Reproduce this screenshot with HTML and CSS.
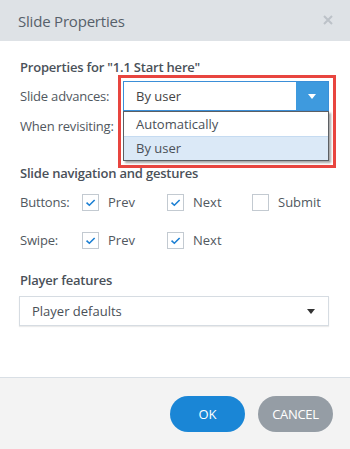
FILE: index.html
```html
<!DOCTYPE html>
<html>
<head>
<meta charset="utf-8">
<link rel="stylesheet" href="styles.css">
</head>
<body>
<div class="dialog">
  <div class="header">
    <div class="title">Slide Properties</div>
    <svg class="close" viewBox="0 0 10 10" width="10" height="10"><path d="M1 1 L9 9 M9 1 L1 9" stroke="#bcc2c8" stroke-width="2" fill="none"/></svg>
  </div>
  <div class="content">
    <div class="heading first">Properties for "1.1 Start here"</div>
    <div class="form-rows">
      <div class="row">
        <div class="label">Slide advances:</div>
        <div class="select-wrap">
          <div class="select active">
            <span class="value">By user</span>
            <span class="arrow-btn"><span class="tri white"></span></span>
          </div>
          <div class="list">
            <div class="option">Automatically</div>
            <div class="option selected">By user</div>
          </div>
          <div class="highlight"></div>
        </div>
      </div>
      <div class="row">
        <div class="label">When revisiting:</div>
        <div class="select-wrap">
          <div class="select"></div>
        </div>
      </div>
    </div>

    <div class="heading nav">Slide navigation and gestures</div>
    <div class="check-row">
      <div class="label short">Buttons:</div>
      <div class="checks">
        <div class="check"><span class="box on"><svg viewBox="0 0 17 17"><path d="M4 8.6 L7.2 11.6 L13.2 5.6" fill="none" stroke="#1b7fd3" stroke-width="1.8"/></svg></span>Prev</div>
        <div class="check"><span class="box on"><svg viewBox="0 0 17 17"><path d="M4 8.6 L7.2 11.6 L13.2 5.6" fill="none" stroke="#1b7fd3" stroke-width="1.8"/></svg></span>Next</div>
        <div class="check"><span class="box"></span>Submit</div>
      </div>
    </div>
    <div class="check-row">
      <div class="label short">Swipe:</div>
      <div class="checks">
        <div class="check"><span class="box on"><svg viewBox="0 0 17 17"><path d="M4 8.6 L7.2 11.6 L13.2 5.6" fill="none" stroke="#1b7fd3" stroke-width="1.8"/></svg></span>Prev</div>
        <div class="check"><span class="box on"><svg viewBox="0 0 17 17"><path d="M4 8.6 L7.2 11.6 L13.2 5.6" fill="none" stroke="#1b7fd3" stroke-width="1.8"/></svg></span>Next</div>
      </div>
    </div>

    <div class="heading player">Player features</div>
    <div class="plain-select">
      <span>Player defaults</span>
      <span class="tri dark"></span>
    </div>
  </div>
  <div class="footer">
    <button class="btn ok">OK</button>
    <button class="btn cancel">CANCEL</button>
  </div>
</div>
</body>
</html>
```
FILE: styles.css
```css
* { box-sizing: border-box; }
html, body { margin: 0; padding: 0; }
body {
  width: 350px;
  height: 449px;
  background: #fff;
  font-family: "Open Sans", "Noto Sans", sans-serif;
  color: #4f565e;
  font-size: 13px;
  overflow: hidden;
}
.dialog {
  display: flex;
  flex-direction: column;
  height: 449px;
}
.header {
  height: 41px;
  background: #dee2e6;
  display: flex;
  align-items: center;
  justify-content: space-between;
  padding: 0 17px 0 18px;
  flex: none;
}
.title {
  font-size: 15px;
  color: #56606a;
  letter-spacing: -0.2px;
}
.close {
  display: block;
  margin-top: -1px;
}
.content {
  flex: 1;
  padding: 0 20px 0 20px;
}
.heading {
  font-weight: 600;
  color: #4a5159;
  font-size: 13px;
  letter-spacing: -0.2px;
  line-height: 18px;
}
.heading.first { margin-top: 17px; }
.form-rows {
  display: flex;
  flex-direction: column;
  margin-top: 5px;
}
.row {
  display: flex;
  align-items: center;
  height: 30px;
}
.label {
  width: 103px;
  flex: none;
  letter-spacing: -0.2px;
  color: #515860;
}
.select-wrap {
  position: relative;
  width: 206px;
  height: 30px;
}
.select {
  height: 30px;
  border: 1px solid #c9d0d7;
  display: flex;
  align-items: center;
  padding-left: 12px;
  background: #fff;
  color: #444;
}
.select.active {
  border-color: #3b8fd8;
  padding-right: 0;
}
.select .value { flex: 1; }
.arrow-btn {
  width: 32px;
  align-self: stretch;
  background: #3e9ade;
  display: flex;
  align-items: center;
  justify-content: center;
}
.tri {
  display: inline-block;
  width: 0;
  height: 0;
  border-left: 4.5px solid transparent;
  border-right: 4.5px solid transparent;
  border-top: 5px solid #fff;
}
.tri.dark { border-top-color: #333; }
.list {
  position: absolute;
  left: 0;
  top: 30px;
  width: 206px;
  background: #fff;
  border: 1px solid #5c5f63;
  box-shadow: 2px 2px 2px rgba(0,0,0,0.35);
  z-index: 2;
}
.option {
  height: 24px;
  line-height: 24px;
  padding-left: 12px;
  color: #4a5057;
}
.option.selected {
  background: #dbe9f7;
  border-top: 1px solid #c5dbf1;
  line-height: 23px;
}
.highlight {
  position: absolute;
  left: -5px;
  top: -6px;
  width: 218px;
  height: 93px;
  border: 3px solid #e8453f;
  z-index: 3;
  pointer-events: none;
}
.heading.nav { margin-top: 23px; }
.check-row {
  display: flex;
  align-items: center;
  margin-top: 11px;
}
.check-row + .check-row { margin-top: 20px; }
.label.short { width: 62px; }
.checks { display: flex; }
.check {
  display: flex;
  align-items: center;
  width: 85px;
  color: #515860;
}
.box {
  width: 17px;
  height: 17px;
  border: 1px solid #c3cad1;
  margin-right: 9px;
  display: block;
  flex: none;
  background: #fff;
}
.box svg { display: block; width: 15px; height: 15px; }
.heading.player { margin-top: 22px; }
.plain-select {
  margin-top: 7px;
  margin-left: -1px;
  width: 310px;
  height: 30px;
  border: 1px solid #d6dce2;
  box-shadow: 0 1px 1px rgba(0,0,0,0.08);
  display: flex;
  align-items: center;
  justify-content: space-between;
  padding: 0 13px 0 12px;
  color: #4a5057;
}
.footer {
  height: 72px;
  flex: none;
  background: #f3f3f3;
  border-top: 1px solid #d9dfe5;
  display: flex;
  align-items: center;
  justify-content: flex-end;
  gap: 13px;
  padding-right: 17px;
}
.btn {
  width: 75px;
  height: 36px;
  border: none;
  border-radius: 18px;
  color: #fff;
  font-family: "Open Sans", "Noto Sans", sans-serif;
  font-size: 13px;
  padding: 0;
}
.btn.ok { background: #1a86d6; }
.btn.cancel { background: #959da5; letter-spacing: -0.3px; }
```
